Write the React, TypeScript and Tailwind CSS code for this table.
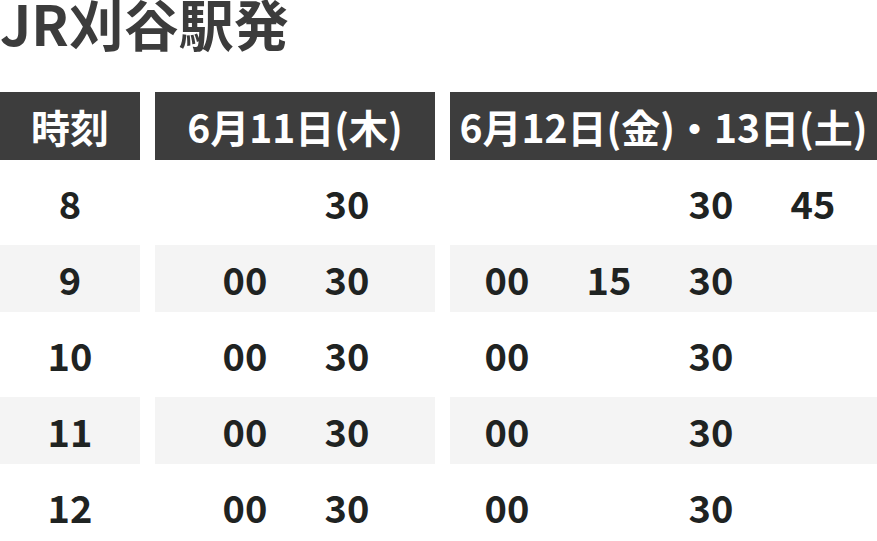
import * as React from "react";

type Row = {
  hour: string;
  day1: string[];
  day2: string[];
};

const rows: Row[] = [
  { hour: "8", day1: ["", "30"], day2: ["", "", "30", "45"] },
  { hour: "9", day1: ["00", "30"], day2: ["00", "15", "30", ""] },
  { hour: "10", day1: ["00", "30"], day2: ["00", "", "30", ""] },
  { hour: "11", day1: ["00", "30"], day2: ["00", "", "30", ""] },
  { hour: "12", day1: ["00", "30"], day2: ["00", "", "30", ""] },
];

const font = { fontFamily: '"Noto Sans CJK JP", "Noto Sans", sans-serif' };

function Slots({ items }: { items: string[] }) {
  return (
    <div className="flex">
      {items.map((m, i) => (
        <span key={i} className="w-[102px] text-center">
          {m}
        </span>
      ))}
    </div>
  );
}

export default function App() {
  return (
    <div className="w-[877px] h-[541px] bg-white overflow-hidden" style={font}>
      <div className="h-[92px]">
        <h1 className="text-[55px] font-bold leading-[44px] text-[#3c3c3c]">
          JR刈谷駅発
        </h1>
      </div>
      <div className="grid grid-cols-[140px_280px_427px] gap-x-[15px] gap-y-[9px]">
        <div className="h-[68px] bg-[#3d3d3d] text-white text-[39px] font-bold flex items-center justify-center">
          時刻
        </div>
        <div className="h-[68px] bg-[#3d3d3d] text-white text-[39px] font-bold flex items-center justify-center">
          6月11日(木)
        </div>
        <div className="h-[68px] bg-[#3d3d3d] text-white text-[39px] font-bold flex items-center justify-center">
          6月12日(金)・13日(土)
        </div>
        {rows.map((r, i) => {
          const bg = i % 2 === 1 ? "bg-[#f4f4f4]" : "bg-white";
          return (
            <React.Fragment key={r.hour}>
              <div className={`${bg} h-[67px] flex items-center justify-center text-[38px] font-bold text-[#1f2322]`}>
                {r.hour}
              </div>
              <div className={`${bg} h-[67px] flex items-center pl-[39px] text-[38px] font-bold text-[#1f2322]`}>
                <Slots items={r.day1} />
              </div>
              <div className={`${bg} h-[67px] flex items-center pl-[6px] text-[38px] font-bold text-[#1f2322]`}>
                <Slots items={r.day2} />
              </div>
            </React.Fragment>
          );
        })}
      </div>
    </div>
  );
}
